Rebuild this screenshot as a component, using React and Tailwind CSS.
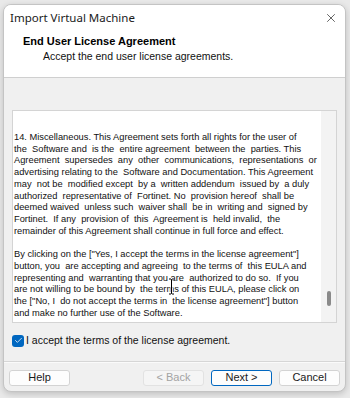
import { Check, X } from 'lucide-react'

// EULA body, one entry per rendered line (double spaces kept on purpose)
const EULA_LINES = [
  '14. Miscellaneous. This Agreement sets forth all rights for the user of',
  'the  Software and  is the  entire agreement  between the  parties. This',
  'Agreement  supersedes  any  other  communications,  representations  or',
  'advertising relating to the  Software and Documentation. This Agreement',
  'may  not be  modified except  by a  written addendum  issued by  a duly',
  'authorized  representative of  Fortinet. No  provision hereof  shall be',
  'deemed waived  unless such  waiver shall  be in  writing and  signed by',
  'Fortinet.  If any  provision of  this  Agreement is  held invalid,  the',
  'remainder of this Agreement shall continue in full force and effect.',
  '',
  'By clicking on the ["Yes, I accept the terms in the license agreement"]',
  'button, you  are accepting and agreeing  to the terms of  this EULA and',
  'representing and  warranting that you are  authorized to do so.  If you',
  'are not willing to be bound by  the terms of this EULA, please click on',
  'the ["No, I  do not accept the terms in  the license agreement"] button',
  'and make no further use of the Software.',
]

const body = { fontFamily: '"Liberation Sans", Arial, sans-serif' }

function DialogButton({ children, primary, disabled }) {
  return (
    <button
      disabled={disabled}
      className={
        primary
          ? 'w-[61px] h-[16px] rounded-[3px] border border-[#0067c0] bg-[#fdfdfd] text-[11px] leading-none text-[#1a1a1a]'
          : disabled
          ? 'w-[61px] h-[16px] rounded-[3px] border border-[#e2e2e2] bg-[#f5f5f5] text-[11px] leading-none text-[#a3a3a3]'
          : 'w-[61px] h-[16px] rounded-[3px] border border-[#d3d3d3] bg-[#fdfdfd] text-[11px] leading-none text-[#1a1a1a]'
      }
      style={body}
    >
      {children}
    </button>
  )
}

export default function App() {
  return (
    <div className="w-[350px] h-[398px] bg-[#e9e9e9] pt-[4px] pl-[3px]">
      <div className="w-[343px] h-[388px] rounded-[8px] border border-[#c4c4c4] bg-[#f0f0f0] shadow-[0_2px_6px_rgba(0,0,0,0.18)] overflow-hidden flex flex-col">

        {/* Title bar + page header */}
        <div className="h-[73px] bg-white border-b border-[#cfcfcf] shrink-0">
          <div className="h-[26px] flex items-center justify-between pl-[6px] pr-[7px]">
            <span className="text-[11.5px] text-[#1a1a1a]" style={{ fontFamily: '"Noto Sans", "Open Sans", sans-serif' }}>
              Import Virtual Machine
            </span>
            <X size={14} strokeWidth={1.2} className="text-[#222]" />
          </div>
          <div className="pl-[19px] pt-[3px]" style={body}>
            <div className="text-[11px] font-bold leading-[15px] text-black">End User License Agreement</div>
            <div className="pl-[20px] text-[10.5px] leading-[15px] text-[#111]">Accept the end user license agreements.</div>
          </div>
        </div>

        {/* License text box */}
        <div className="px-[8px] pt-[32px]">
          <div className="relative h-[213px] border border-[#d4d4d4] bg-white flex">
            <div className="flex-1 pl-[1px] pt-[21px] text-[9.3px] leading-[11.73px] text-[#111] whitespace-pre overflow-hidden" style={body}>
              {EULA_LINES.map((line, i) => (
                <div key={i} className="h-[11.73px]">{line}</div>
              ))}
            </div>
            <div className="w-[15px] bg-[#f3f3f3] flex justify-center">
              <div className="w-[4px] h-[15px] mt-[180px] rounded-full bg-[#8a8a8a]" />
            </div>

            {/* mouse I-beam over the text */}
            <svg className="absolute left-[155px] top-[167px]" width="7" height="17" viewBox="0 0 7 17">
              <path d="M1 1h2l0.5 0.5L4 1h2M3.5 1.5v14M1 16h2l0.5-0.5L4 16h2" stroke="#fff" strokeWidth="2.2" fill="none" />
              <path d="M1 1h2l0.5 0.5L4 1h2M3.5 1.5v14M1 16h2l0.5-0.5L4 16h2" stroke="#000" strokeWidth="1" fill="none" />
            </svg>
          </div>
        </div>

        {/* Accept checkbox */}
        <div className="flex items-center gap-[2px] pl-[8px] pt-[10px]" style={body}>
          <div className="w-[12px] h-[12px] rounded-[3px] bg-[#0067c0] flex items-center justify-center">
            <Check size={9} strokeWidth={2} className="text-white" />
          </div>
          <span className="text-[10.5px] text-[#111]">I accept the terms of the license agreement.</span>
        </div>

        {/* Separator + buttons */}
        <div className="mt-[12px] border-t border-[#d6d6d6] shadow-[0_1px_0_#fafafa]" />
        <div className="flex items-center pl-[5px] pr-[5px] pt-[8px]">
          <DialogButton>Help</DialogButton>
          <div className="flex-1" />
          <div className="flex gap-[7px]">
            <DialogButton disabled>&lt; Back</DialogButton>
            <DialogButton primary>Next &gt;</DialogButton>
            <DialogButton>Cancel</DialogButton>
          </div>
        </div>
      </div>
    </div>
  )
}
